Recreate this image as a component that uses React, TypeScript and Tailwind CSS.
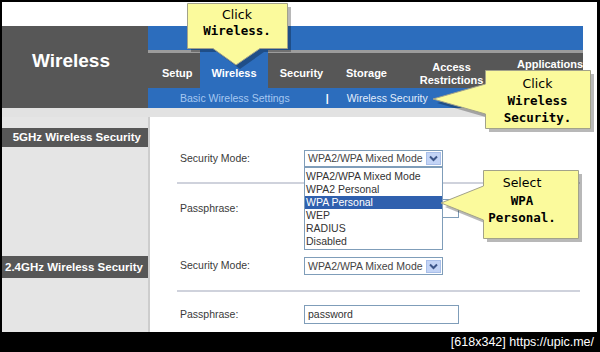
import React from "react";

function Chevron() {
  return (
    <div className="w-[15px] h-[13px] mr-[1px] bg-[#c3d4f6] border border-[#a9bfe9] flex items-center justify-center">
      <svg width="11" height="9" viewBox="0 0 11 9">
        <path d="M2 2.5 L5.5 6 L9 2.5" fill="none" stroke="#3d5689" strokeWidth="2" />
      </svg>
    </div>
  );
}

function Select({ h }: { h: string }) {
  return (
    <div className={`w-[139px] ${h} border border-[#7f9db9] bg-white flex items-center justify-between`}>
      <span className="pl-[3px] text-[10.5px] text-[#454545] leading-none">WPA2/WPA Mixed Mode</span>
      <Chevron />
    </div>
  );
}

export default function App() {
  const items = ["WPA2/WPA Mixed Mode", "WPA2 Personal", "WPA Personal", "WEP", "RADIUS", "Disabled"];
  return (
    <div className="relative w-[600px] h-[352px] bg-black flex flex-col pl-[2px] pt-[2px] overflow-hidden font-['Liberation_Sans',Arial,sans-serif]">
      <div className="w-[595px] h-[330px] bg-white flex flex-col">
        <div className="h-[24px]" />
        {/* header */}
        <div className="h-[82px] flex">
          <div className="w-[146px] bg-[#575757] pt-[24px] pl-[30px] text-white font-bold text-[19px] leading-[22px]">
            Wireless
          </div>
          <div className="w-[435px] flex flex-col">
            <div className="h-[24px] bg-[#2c6dbd]" />
            <div className="h-[38px] flex bg-[#575757] text-white font-bold text-[11px] leading-[13px]">
              <div className="w-[52px] flex flex-col">
                <div className="h-[3px] bg-[#9c9c9c]" />
                <div className="pt-[14px] pl-[14px]">Setup</div>
              </div>
              <div className="w-[68px] flex flex-col bg-[#2c6dbd]">
                <div className="pt-[17px] text-center">Wireless</div>
              </div>
              <div className="w-[67px] flex flex-col">
                <div className="h-[3px] bg-[#9c9c9c]" />
                <div className="pt-[14px] text-center">Security</div>
              </div>
              <div className="w-[63px] flex flex-col">
                <div className="h-[3px] bg-[#9c9c9c]" />
                <div className="pt-[14px] text-center">Storage</div>
              </div>
              <div className="w-[107px] flex flex-col">
                <div className="h-[3px] bg-[#9c9c9c]" />
                <div className="pt-[8px] text-center">Access<br />Restrictions</div>
              </div>
              <div className="w-[78px] flex flex-col">
                <div className="h-[3px] bg-[#9c9c9c]" />
                <div className="pt-[5px] pl-[12px] whitespace-nowrap">Applications</div>
              </div>
            </div>
            <div className="h-[20px] bg-[#2c6dbd] flex items-center text-[10.5px] leading-none">
              <span className="ml-[32px] text-[#a6c8f1]">Basic Wireless Settings</span>
              <span className="ml-[36px] text-white font-bold">|</span>
              <span className="ml-[18px] text-[#e3eefc]">Wireless Security</span>
            </div>
          </div>
          <div className="flex-1 bg-white" />
        </div>
        <div className="h-[9px] w-[581px] bg-[#e2e2e2]" />
        {/* 5GHz row */}
        <div className="flex h-[133px]">
          <div className="w-[148px] bg-[#e5e5e5] border-r-2 border-[#cdcdcd] pt-[11px]">
            <div className="h-[19px] bg-[#575757] text-white font-bold text-[11.5px] leading-[19px] text-right pr-[7px]">
              5GHz Wireless Security
            </div>
          </div>
          <div className="relative w-[433px] pl-[27px] pt-[33px] flex flex-col text-[10.5px] text-[#3a3a3a]">
            <div className="h-[17px] flex items-center pl-[3px]">
              <span className="w-[124px]">Security Mode:</span>
              <Select h="h-[17px]" />
            </div>
            <div className="mt-[15px] h-[2px] w-[403px] bg-[#cfd2dc]" />
            <div className="mt-[15px] h-[19px] flex items-center pl-[3px]">
              <span className="w-[124px]">Passphrase:</span>
              <div className="w-[155px] h-[19px] border border-[#7f9db9] bg-white" />
            </div>
            {/* dropdown list */}
            <div className="absolute left-[154px] top-[50px] w-[139px] h-[83px] border border-[#7f9db9] bg-white pt-[2px] text-[10.5px] text-[#333]">
              {items.map((t) => (
                <div
                  key={t}
                  className={
                    t === "WPA Personal"
                      ? "h-[13px] leading-[13px] pl-[1px] bg-[#2f60ae] text-white"
                      : "h-[13px] leading-[13px] pl-[1px]"
                  }
                >
                  {t}
                </div>
              ))}
            </div>
          </div>
        </div>
        {/* 2.4GHz row */}
        <div className="flex flex-1">
          <div className="w-[148px] bg-[#e5e5e5] border-r-2 border-[#cdcdcd] pt-[6px]">
            <div className="h-[22px] bg-[#575757] text-white font-bold text-[11.5px] leading-[22px] text-right pr-[5px]">
              2.4GHz Wireless Security
            </div>
          </div>
          <div className="w-[433px] pl-[27px] pt-[7px] flex flex-col text-[10.5px] text-[#3a3a3a]">
            <div className="h-[18px] flex items-center pl-[3px]">
              <span className="w-[124px]">Security Mode:</span>
              <Select h="h-[18px]" />
            </div>
            <div className="mt-[15px] h-[2px] w-[403px] bg-[#cfd2dc]" />
            <div className="mt-[13px] h-[19px] flex items-center pl-[3px]">
              <span className="w-[124px]">Passphrase:</span>
              <div className="w-[155px] h-[19px] border border-[#7f9db9] bg-white flex items-center pl-[3px] text-[#333]">
                password
              </div>
            </div>
          </div>
        </div>
      </div>
      {/* bottom strip */}
      <div className="flex-1 flex items-center justify-end pr-[6px] text-white text-[12.5px] leading-none">
        [618x342] https://upic.me/
      </div>

      {/* callouts */}
      <svg className="absolute left-0 top-0 pointer-events-none" width="600" height="352" viewBox="0 0 600 352">
        <g fill="rgba(0,0,0,0.28)" transform="translate(4,4)">
          <path d="M187,3 H287 V48 H260 L236,65 L213,48 H187 Z" />
          <path d="M485,70 H590 V128 H485 V114 L433,99 L485,84 Z" />
          <path d="M483,170 H578 V238 H483 V220 L441,203 L483,186 Z" />
        </g>
        <g fill="#fbfa9c" stroke="#a2a28a" strokeWidth="1">
          <path d="M187.5,3.5 H287.5 V48.5 H260 L236,65 L213,48.5 H187.5 Z" />
          <path d="M485.5,70.5 H590.5 V128.5 H485.5 V114 L433,99 L485.5,84 Z" />
          <path d="M483.5,170.5 H578.5 V238.5 H483.5 V220 L441,203 L483.5,186 Z" />
        </g>
      </svg>
      <div className="absolute left-[187px] top-[7px] w-[100px] text-center text-black leading-[16px]">
        <div className="font-['DejaVu_Sans',sans-serif] text-[12.5px]">Click</div>
        <div className="font-['DejaVu_Sans_Mono',monospace] font-bold text-[12.5px]">Wireless.</div>
      </div>
      <div className="absolute left-[485px] top-[75px] w-[105px] text-center text-black leading-[17px]">
        <div className="font-['DejaVu_Sans',sans-serif] text-[12.5px]">Click</div>
        <div className="font-['DejaVu_Sans_Mono',monospace] font-bold text-[12.5px]">Wireless</div>
        <div className="font-['DejaVu_Sans_Mono',monospace] font-bold text-[12.5px]">Security.</div>
      </div>
      <div className="absolute left-[483px] top-[174px] w-[78px] text-center text-black leading-[17.5px]">
        <div className="font-['DejaVu_Sans',sans-serif] text-[12.5px]">Select</div>
        <div className="font-['DejaVu_Sans_Mono',monospace] font-bold text-[12.5px]">WPA</div>
        <div className="font-['DejaVu_Sans_Mono',monospace] font-bold text-[12.5px] whitespace-nowrap">Personal.</div>
      </div>
    </div>
  );
}
